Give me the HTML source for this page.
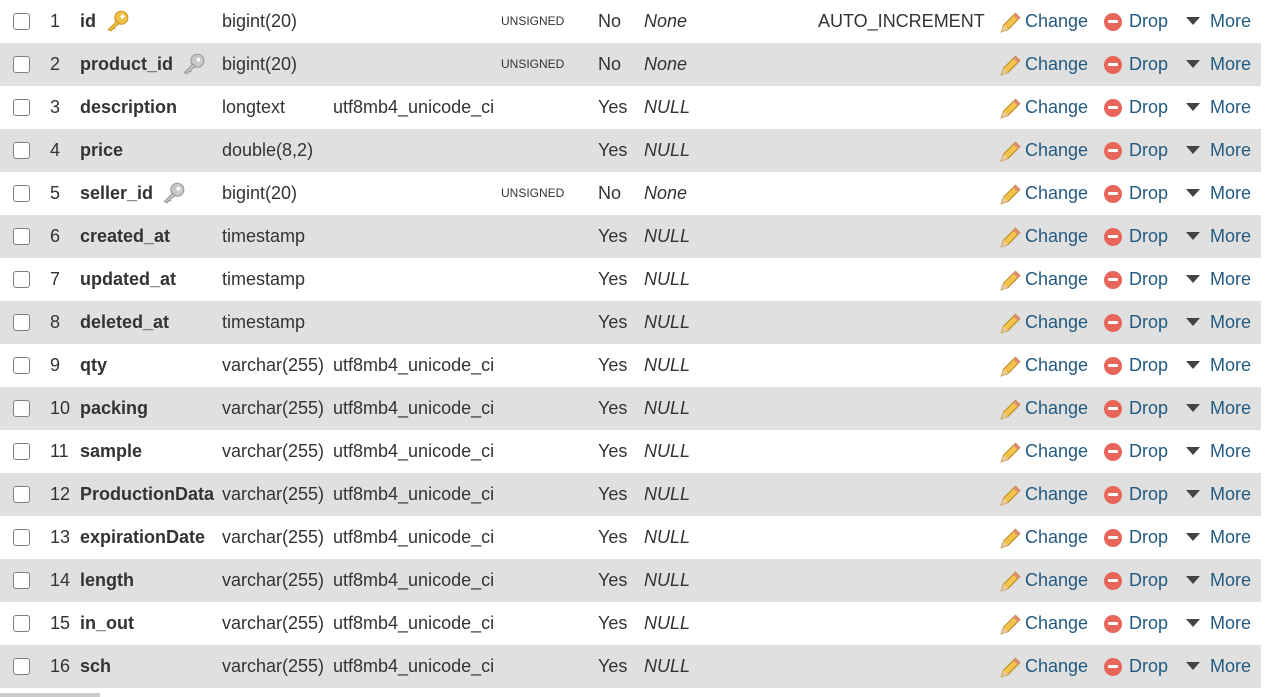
<!DOCTYPE html>
<html><head><style>
body{margin:0;width:1280px;height:697px;background:#fff;font-family:"Liberation Sans",Arial,sans-serif;color:#333;font-size:18px;overflow:hidden;position:relative}
.r{position:absolute;left:0;width:1261px;height:43px}
.g{background:#e0e0e0}
.r span,.r i,.r b,.r div{position:absolute;top:11px;line-height:20px;white-space:nowrap}
.cb{left:13px;top:13px!important;width:15px;height:15px;border:1px solid #808080;border-radius:3px;background:#fff}
.n{left:50px}
.nm{left:80px;font-weight:bold}
.t{left:222px}.c{left:333px}
.u{left:501px;font-size:12px;top:11px!important}
.nl{left:598px}.d{left:644px;font-style:italic}
.e{left:818px}
.a{color:#235a81}
.pen{left:998px;top:11px!important}
.ch{left:1025px}
.dr{left:1104px;top:13px!important;width:18px;height:18px;border-radius:50%;background:#e8655a}
.dr:after{content:"";position:absolute;left:4px;top:7px;width:10px;height:3px;background:#fff;border-radius:1px}
.dt{left:1129px}
.ar{left:1186px;top:17px!important;width:0;height:0;border-left:7px solid transparent;border-right:7px solid transparent;border-top:8px solid #444}
.mo{left:1210px}
</style></head><body>
<div id="rows"></div>
<div style="position:absolute;left:0;top:693px;width:100px;height:4px;background:#ccc"></div>
<script>
var d=[["id","bigint(20)","","UNSIGNED","No","None","AUTO_INCREMENT","k1"],
["product_id","bigint(20)","","UNSIGNED","No","None","","k2"],
["description","longtext","utf8mb4_unicode_ci","","Yes","NULL",""],
["price","double(8,2)","","","Yes","NULL",""],
["seller_id","bigint(20)","","UNSIGNED","No","None","","k2"],
["created_at","timestamp","","","Yes","NULL",""],
["updated_at","timestamp","","","Yes","NULL",""],
["deleted_at","timestamp","","","Yes","NULL",""],
["qty","varchar(255)","utf8mb4_unicode_ci","","Yes","NULL",""],
["packing","varchar(255)","utf8mb4_unicode_ci","","Yes","NULL",""],
["sample","varchar(255)","utf8mb4_unicode_ci","","Yes","NULL",""],
["ProductionData","varchar(255)","utf8mb4_unicode_ci","","Yes","NULL",""],
["expirationDate","varchar(255)","utf8mb4_unicode_ci","","Yes","NULL",""],
["length","varchar(255)","utf8mb4_unicode_ci","","Yes","NULL",""],
["in_out","varchar(255)","utf8mb4_unicode_ci","","Yes","NULL",""],
["sch","varchar(255)","utf8mb4_unicode_ci","","Yes","NULL",""]];
var pen='<svg width="24" height="22" viewBox="0 0 22 20"><path d="M3 19 L5 13 L16 2 L20 6 L9 17 Z" fill="#f3c44a" stroke="#b88a2a" stroke-width="1"/><path d="M3 19 L5 13 L9 17 Z" fill="#e9c9a0"/><path d="M16 2 L20 6 L18 8 L14 4Z" fill="#e58a7a"/></svg>';
function key(c,s){return '<svg width="26" height="24" viewBox="0 0 24 20"><circle cx="16" cy="7" r="6" fill="'+c+'" stroke="'+s+'"/><circle cx="17" cy="6" r="1.8" fill="#fff"/><path d="M12 10 L4 18 L7 19 L8 17 L10 17 L10 15 L12 14 L14 12Z" fill="'+c+'" stroke="'+s+'"/></svg>';}
var h='';
d.forEach(function(r,i){
var kx=r[0]=="id"?104:(r[0]=="product_id"?180:160);
h+='<div class="r'+(i%2?' g':'')+'" style="top:'+(i*43)+'px"><div class="cb"></div><span class="n">'+(i+1)+'</span><b class="nm">'+r[0]+'</b>'+
(r[7]?'<span style="left:'+kx+'px;top:9px">'+(r[7]=="k1"?key("#f2c04a","#c99520"):key("#c8c8c8","#999"))+'</span>':'')+
'<span class="t">'+r[1]+'</span><span class="c">'+r[2]+'</span><span class="u">'+r[3]+'</span><span class="nl">'+r[4]+'</span><i class="d">'+r[5]+'</i><span class="e">'+r[6]+'</span>'+
'<span class="pen">'+pen+'</span><span class="ch a">Change</span><div class="dr"></div><span class="dt a">Drop</span><div class="ar"></div><span class="mo a">More</span></div>';
});
document.getElementById('rows').innerHTML=h;
</script>
</body></html>
